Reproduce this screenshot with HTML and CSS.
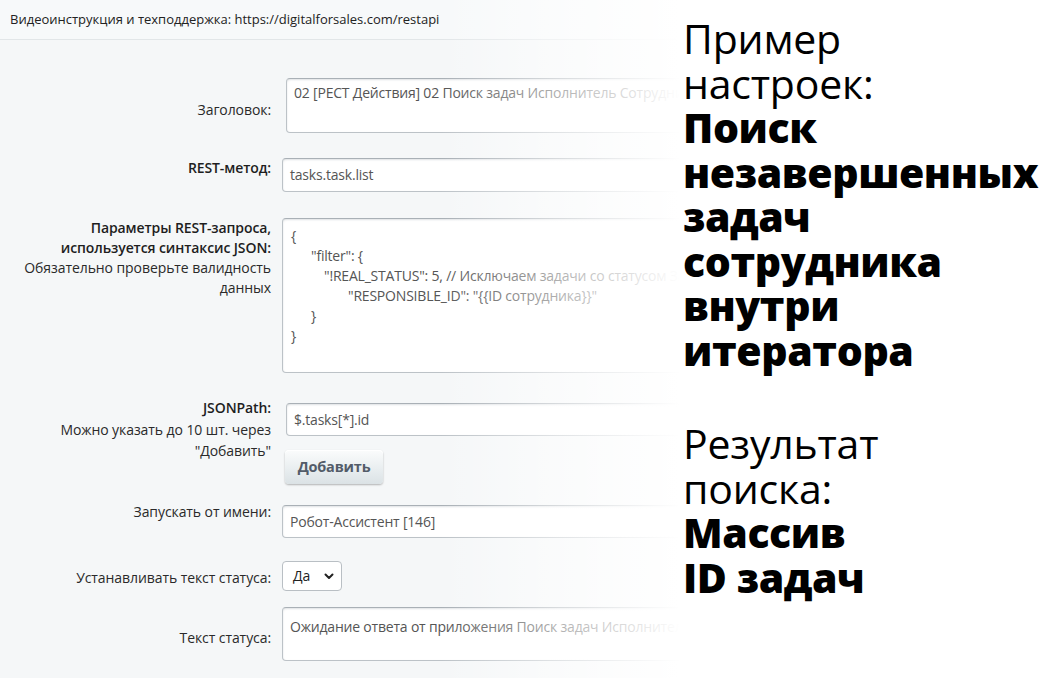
FILE: index.html
```html
<!DOCTYPE html>
<html lang="ru">
<head>
<meta charset="utf-8">
<title>REST-действие</title>
<link rel="stylesheet" href="styles.css">
</head>
<body>
<div class="page">
  <div class="topbar">Видеоинструкция и техподдержка: https://digitalforsales.com/restapi</div>
  <div class="form">
    <div class="row row-title">
      <div class="label label-title">Заголовок:</div>
      <div class="field"><div class="box ta ta-title">02 [РЕСТ Действия] 02 Поиск задач Исполнитель Сотрудник</div></div>
    </div>
    <div class="row row-method">
      <div class="label"><b>REST-метод:</b></div>
      <div class="field"><div class="box inp">tasks.task.list</div></div>
    </div>
    <div class="row row-params">
      <div class="label"><b>Параметры REST-запроса,<br>используется синтаксис JSON:</b><br>Обязательно проверьте валидность<br>данных</div>
      <div class="field"><div class="box ta ta-json"><div>{</div><div class="i1">"filter": {</div><div class="i2">"!REAL_STATUS": 5, // Исключаем задачи со статусом Завершена</div><div class="i3">"RESPONSIBLE_ID": "{{ID сотрудника}}"</div><div class="i1">}</div><div>}</div></div></div>
    </div>
    <div class="row row-path">
      <div class="label label-path"><b>JSONPath:</b><br>Можно указать до 10 шт. через<br>"Добавить"</div>
      <div class="field">
        <div class="box inp inp-path">$.tasks[*].id</div>
        <div class="btn">Добавить</div>
      </div>
    </div>
    <div class="row row-user">
      <div class="label label-user">Запускать от имени:</div>
      <div class="field"><div class="box inp">Робот-Ассистент [146]</div></div>
    </div>
    <div class="row row-set">
      <div class="label label-set">Устанавливать текст статуса:</div>
      <div class="field"><div class="box sel">Да<svg class="chev" width="10" height="7" viewBox="0 0 10 7"><path d="M1.5 1.5 L5 5 L8.5 1.5" fill="none" stroke="#222" stroke-width="2" stroke-linecap="round" stroke-linejoin="round"/></svg></div></div>
    </div>
    <div class="row row-status">
      <div class="label label-status">Текст статуса:</div>
      <div class="field"><div class="box ta ta-status">Ожидание ответа от приложения Поиск задач Исполнитель Сотрудник</div></div>
    </div>
  </div>
  <div class="fade"></div>
  <div class="promo">
    <div class="light">Пример<br>настроек:</div>
    <div class="heavy">Поиск<br>незавершенных<br>задач<br>сотрудника<br>внутри<br>итератора</div>
    <div class="light gap">Результат<br>поиска:</div>
    <div class="heavy">Массив<br>ID задач</div>
  </div>
</div>
</body>
</html>
```

FILE: styles.css
```css
* { box-sizing: border-box; }
html, body { margin: 0; padding: 0; }
body {
  background: #f5f7f8;
  font-family: "Open Sans", "Noto Sans", sans-serif;
  color: #333;
  width: 1062px;
  height: 678px;
  overflow: hidden;
}
.page { position: relative; width: 1062px; height: 678px; }

.topbar {
  height: 40px;
  border-bottom: 1px solid #e2e6e8;
  background: #f7f9fa;
  padding: 0 10px;
  font-size: 13px;
  line-height: 39px;
  letter-spacing: 0;
  color: #222;
  white-space: nowrap;
}

.form { padding-top: 38px; }
.row {
  display: grid;
  grid-template-columns: 271px 540px;
  column-gap: 11px;
  align-items: start;
}
.label {
  text-align: right;
  font-size: 14px;
  line-height: 20px;
  letter-spacing: -0.08px;
  color: #2a2a2a;
  white-space: nowrap;
}
.label b { font-weight: 600; color: #1e1e1e; letter-spacing: -0.1px; }
.field { display: flex; flex-direction: column; align-items: flex-start; }

.box {
  background: #fff;
  border: 1px solid #bcc2c7;
  border-top-color: #a9b0b6;
  border-radius: 4px;
  box-shadow: inset 0 1px 2px rgba(160, 170, 176, 0.35);
  font-size: 14px;
  line-height: 20px;
  letter-spacing: -0.2px;
  color: #555;
  white-space: nowrap;
  overflow: hidden;
  padding: 0 7px;
  width: 540px;
}
.inp { height: 34px; line-height: 32px; }
.ta { padding-top: 4px; }

.row-title .field { padding-left: 4px; }
.ta-title { height: 55px; padding-top: 4px; width: 536px; }
.label-title { padding-top: 22px; }

.row-method { margin-top: 25px; }

.row-params { margin-top: 26px; }
.ta-json { height: 155px; padding-top: 7px; padding-left: 8px; }
.ta-json .i1 { padding-left: 20px; }
.ta-json .i2 { padding-left: 33px; }
.ta-json .i3 { padding-left: 57px; }

.row-path { margin-top: 24px; }
.label-path { line-height: 21.5px; }
.inp-path { margin-top: 6px; margin-left: 4px; height: 33px; line-height: 31px; width: 536px; }
.btn {
  margin-top: 14px;
  margin-left: 3px;
  width: 98px;
  height: 34px;
  border-radius: 4px;
  background: linear-gradient(to bottom, #fbfcfc 0%, #e9eef0 55%, #dbe2e5 100%);
  box-shadow: 0 1px 2px rgba(0, 0, 0, 0.28), inset 0 1px 0 #fff;
  font-size: 14.5px;
  font-weight: 700;
  letter-spacing: -0.2px;
  color: #535c69;
  text-align: center;
  line-height: 34px;
}

.row-user { margin-top: 21px; }
.label-user { line-height: 14px; }
.row-user .inp { height: 33px; line-height: 31px; }

.row-set { margin-top: 23px; }
.label-set { padding-top: 7px; }
.sel {
  width: 60px;
  height: 30px;
  padding: 0 7px 0 10px;
  line-height: 28px;
  display: flex;
  align-items: center;
  justify-content: space-between;
  color: #222;
  box-shadow: none;
  border-color: #b9bfc4;
}
.chev { display: block; }

.row-status { margin-top: 16px; }
.label-status { padding-top: 21px; }
.ta-status { height: 54px; padding-top: 9px; }

.fade {
  position: absolute;
  top: 0;
  left: 440px;
  right: 0;
  bottom: 0;
  background: linear-gradient(to right, rgba(255,255,255,0) 0px, rgba(255,255,255,0.55) 120px, #fff 240px);
}

.promo {
  position: absolute;
  left: 683px;
  top: 16px;
  font-family: "Open Sans", "Noto Sans", sans-serif;
  font-size: 41px;
  line-height: 44.5px;
  color: #000;
  white-space: nowrap;
}
.promo .light { font-weight: 400; letter-spacing: -0.2px; }
.promo .heavy { font-weight: 800; letter-spacing: -0.4px; }
.promo .gap { margin-top: 49px; }
```
